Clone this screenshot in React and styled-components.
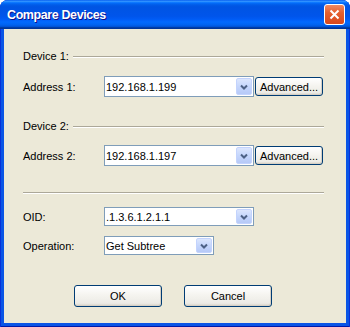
import React from "react";
import styled, { createGlobalStyle } from "styled-components";

const GlobalStyle = createGlobalStyle`
  body {
    margin: 0;
    background: #fff;
    font-family: "Liberation Sans", Arial, sans-serif;
  }
`;

const Window = styled.div`
  width: 350px;
  height: 327px;
  box-sizing: border-box;
  display: flex;
  flex-direction: column;
  background: #0a55e6;
  border-radius: 8px 8px 0 0;
  box-shadow: inset 1px 0 #0831d9, inset -1px 0 #0831d9, inset 0 -1px #0019a8;
  overflow: hidden;
`;

const TitleBar = styled.div`
  height: 29px;
  flex-shrink: 0;
  display: flex;
  align-items: center;
  justify-content: space-between;
  padding: 0 5px 0 7px;
  background: linear-gradient(
    180deg,
    #0058ee 0%,
    #3593ff 4%,
    #288eff 6%,
    #127dff 8%,
    #036ffc 10%,
    #0262ee 14%,
    #0057e5 20%,
    #0054e3 24%,
    #0055eb 56%,
    #005bf5 66%,
    #026afe 76%,
    #0062ef 86%,
    #0052d6 92%,
    #0040ab 94%,
    #003092 100%
  );
`;

const Title = styled.div`
  color: #fff;
  font-weight: bold;
  font-size: 12.5px;
  letter-spacing: -0.4px;
  text-shadow: 1px 1px #0f1089;
`;

const CloseButton = styled.div`
  width: 19px;
  height: 19px;
  border: 1px solid #fff;
  border-radius: 3px;
  display: flex;
  align-items: center;
  justify-content: center;
  background: linear-gradient(180deg, #ee8a63 0%, #e5602f 40%, #d9481c 100%);
`;

const Client = styled.div`
  flex: 1;
  margin: 0 4px 4px;
  background: #ece9d8;
  padding: 21px 22px 0 19px;
  display: flex;
  flex-direction: column;
  font-size: 11px;
  color: #000;
`;

const GroupHeader = styled.div`
  display: flex;
  align-items: center;
  gap: 4px;
  height: 13px;
  line-height: 13px;
  margin-top: ${(p) => p.$top || 0}px;
  &::after {
    content: "";
    flex: 1;
    border-top: 1px solid #aca899;
    border-bottom: 1px solid #fff;
  }
`;

const FieldRow = styled.div`
  display: flex;
  align-items: center;
  margin-top: ${(p) => p.$top || 0}px;
`;

const Label = styled.div`
  width: 81px;
  flex-shrink: 0;
`;

const Combo = styled.div`
  width: ${(p) => p.$width}px;
  height: ${(p) => p.$height}px;
  box-sizing: border-box;
  border: 1px solid #7f9db9;
  background: #fff;
  display: flex;
  align-items: stretch;
  padding: 1px;
`;

const ComboText = styled.div`
  flex: 1;
  display: flex;
  align-items: center;
  white-space: nowrap;
`;

const DropButton = styled.div`
  width: 16px;
  box-sizing: border-box;
  border: 1px solid #c3d3fd;
  border-radius: 2px;
  background: linear-gradient(180deg, #dce6fd 0%, #c5d6fc 50%, #b6c9f7 100%);
  display: flex;
  align-items: center;
  justify-content: center;
`;

const Separator = styled.div`
  margin-top: ${(p) => p.$top}px;
  border-top: 1px solid #aca899;
  border-bottom: 1px solid #fff;
`;

const Button = styled.button`
  width: ${(p) => p.$width}px;
  height: ${(p) => p.$height}px;
  margin-left: ${(p) => p.$left || 0}px;
  box-sizing: border-box;
  padding: 0;
  font-family: inherit;
  font-size: 11px;
  color: #000;
  border: 1px solid #003c74;
  border-radius: 3px;
  background: linear-gradient(180deg, #fff 0%, #f4f3ee 50%, #ecebe6 86%, #d6d0c5 100%);
  box-shadow: inset -1px -1px #d6d0c5;
`;

const ButtonRow = styled.div`
  display: flex;
  justify-content: center;
  gap: 22px;
  margin-top: 30px;
  padding-right: 1px;
`;

function Chevron() {
  return (
    <svg width="8" height="6" viewBox="0 0 8 6">
      <path d="M1 1.5 L4 4.5 L7 1.5" fill="none" stroke="#4d6185" strokeWidth="2" />
    </svg>
  );
}

function ComboBox({ value, width, height }) {
  return (
    <Combo $width={width} $height={height}>
      <ComboText>{value}</ComboText>
      <DropButton>
        <Chevron />
      </DropButton>
    </Combo>
  );
}

export default function App() {
  return (
    <>
      <GlobalStyle />
      <Window>
        <TitleBar>
          <Title>Compare Devices</Title>
          <CloseButton>
            <svg width="11" height="11" viewBox="0 0 11 11">
              <path d="M1.5 1.5 L9.5 9.5 M9.5 1.5 L1.5 9.5" stroke="#fff" strokeWidth="2" />
            </svg>
          </CloseButton>
        </TitleBar>
        <Client>
          <GroupHeader>Device 1:</GroupHeader>
          <FieldRow $top={13}>
            <Label>Address 1:</Label>
            <ComboBox value="192.168.1.199" width={150} height={21} />
            <Button $width={68} $height={19} $left={1}>
              Advanced...
            </Button>
          </FieldRow>
          <GroupHeader $top={23}>Device 2:</GroupHeader>
          <FieldRow $top={12}>
            <Label>Address 2:</Label>
            <ComboBox value="192.168.1.197" width={150} height={21} />
            <Button $width={68} $height={19} $left={1}>
              Advanced...
            </Button>
          </FieldRow>
          <Separator $top={26} />
          <FieldRow $top={13}>
            <Label>OID:</Label>
            <ComboBox value=".1.3.6.1.2.1.1" width={150} height={19} />
          </FieldRow>
          <FieldRow $top={10}>
            <Label>Operation:</Label>
            <ComboBox value="Get Subtree" width={110} height={19} />
          </FieldRow>
          <ButtonRow>
            <Button $width={88} $height={22}>
              OK
            </Button>
            <Button $width={88} $height={22}>
              Cancel
            </Button>
          </ButtonRow>
        </Client>
      </Window>
    </>
  );
}
